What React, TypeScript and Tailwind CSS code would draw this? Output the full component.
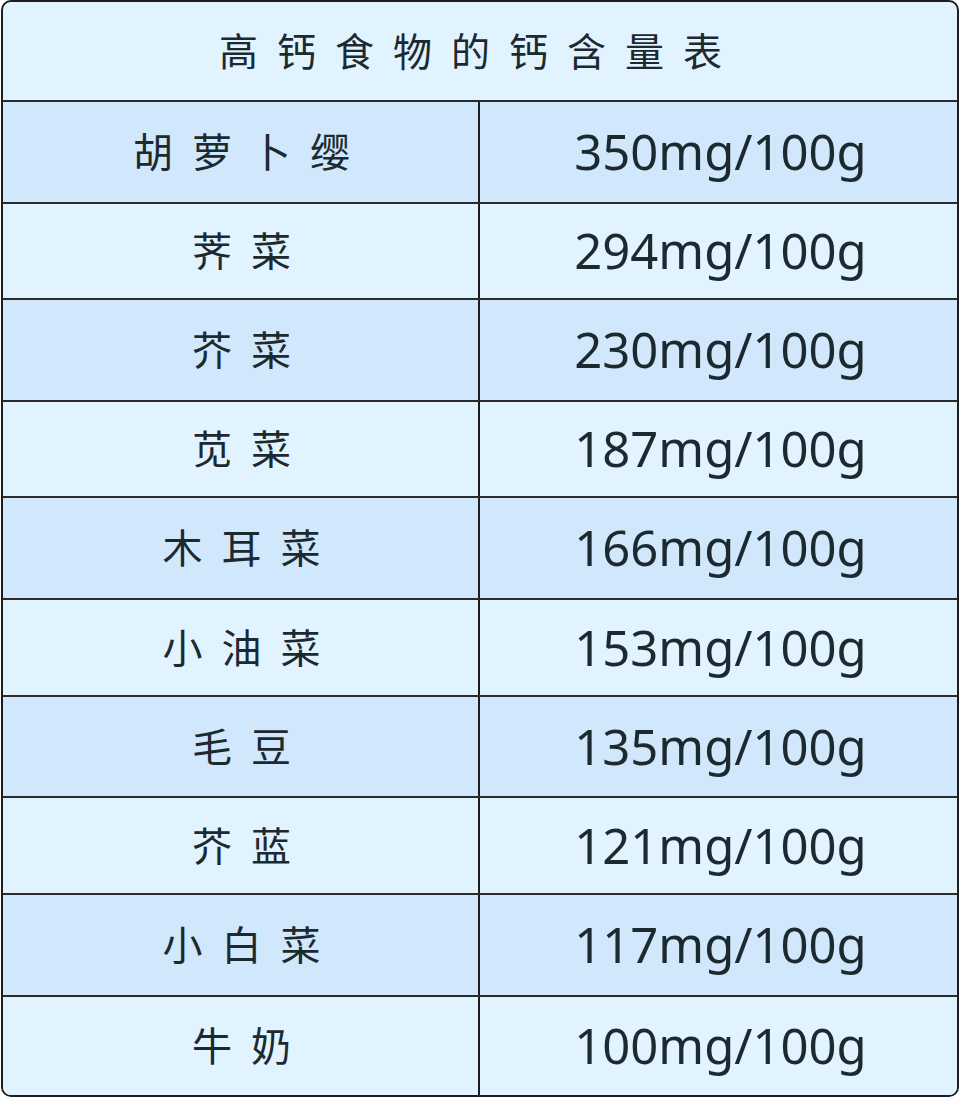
const rows = [
  { name: "胡萝卜缨", value: "350mg/100g", dark: true, h: "h-[102px]" },
  { name: "荠菜", value: "294mg/100g", dark: false, h: "h-[96px]" },
  { name: "芥菜", value: "230mg/100g", dark: true, h: "h-[102px]" },
  { name: "苋菜", value: "187mg/100g", dark: false, h: "h-[96px]" },
  { name: "木耳菜", value: "166mg/100g", dark: true, h: "h-[102px]" },
  { name: "小油菜", value: "153mg/100g", dark: false, h: "h-[97px]" },
  { name: "毛豆", value: "135mg/100g", dark: true, h: "h-[101px]" },
  { name: "芥蓝", value: "121mg/100g", dark: false, h: "h-[97px]" },
  { name: "小白菜", value: "117mg/100g", dark: true, h: "h-[102px]" },
  { name: "牛奶", value: "100mg/100g", dark: false, h: "h-[98px]" },
];

const App = () => {
  return (
    <div className="w-[960px] h-[1098px] bg-white font-['Noto_Sans','Noto_Sans_CJK_SC',sans-serif] text-[#1c2a30]">
      <div className="w-[958px] h-[1097px] ml-px border-2 border-[#1e1e1e] rounded-[10px] overflow-hidden bg-[#e1f3fe] flex flex-col">
        <div className="h-[100px] flex items-center justify-center border-b-2 border-[#2b2b2b] text-[39px] tracking-[19px]">
          高钙食物的钙含量表
        </div>
        {rows.map((r, i) => (
          <div
            key={r.name}
            className={`${r.h} flex ${r.dark ? "bg-[#d0e7fc]" : "bg-[#e1f3fe]"} ${i < rows.length - 1 ? "border-b-2 border-[#2b2b2b]" : ""}`}
          >
            <div className="w-[477px] flex items-center justify-center border-r-2 border-[#1e1e1e] text-[40px] tracking-[19px] pl-[21px]">
              {r.name}
            </div>
            <div className="flex-1 flex items-center justify-center text-[49px] pl-[4px]">
              {r.value}
            </div>
          </div>
        ))}
      </div>
    </div>
  );
};

export default App;
